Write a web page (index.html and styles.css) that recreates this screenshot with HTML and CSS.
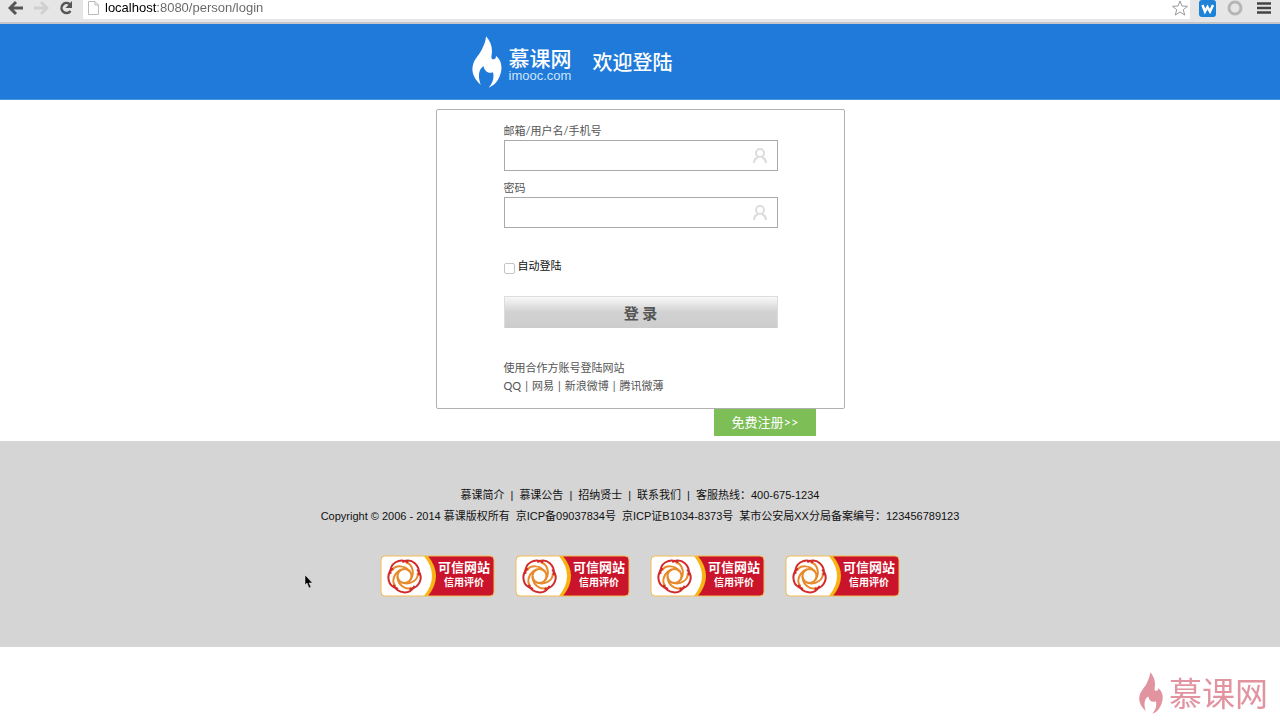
FILE: index.html
```
<!DOCTYPE html>
<html lang="zh-CN">
<head>
    <meta charset="UTF-8">
    <meta name="viewport" content="width=device-width, initial-scale=1.0">
    <title>欢迎登陆</title>
    <link rel="stylesheet" href="styles.css">
</head>
<body>
    <!-- Shared shapes -->
    <svg class="defs" width="0" height="0" aria-hidden="true">
        <defs>
            <symbol id="flame" viewBox="0 0 90 158">
                <path d="M42 1C56 16 63 36 59 58C57 67 60 72 65 71C71 70 73 65 72 60C88 72 92 92 87 112C81 134 70 150 50 157C62 144 68 128 63 110C50 116 37 108 35 92C22 98 15 120 26 148C6 130 -3 110 2 90C7 68 20 60 29 42C35 29 41 18 42 1Z"/>
            </symbol>
            <symbol id="person" viewBox="0 0 16 16">
                <circle cx="8" cy="5" r="4" fill="none" stroke="currentColor" stroke-width="2"/>
                <path d="M2 15C2 12 4 10 6 9M14 15C14 12 12 10 10 9" fill="none" stroke="currentColor" stroke-width="2"/>
            </symbol>
            <symbol id="badge" viewBox="0 0 115 42">
                <rect x="1" y="1" width="113" height="40" rx="4" fill="#c9142b"/>
                <path d="M5 1H48Q64 21 48 41H5Q1 41 1 37V5Q1 1 5 1Z" fill="#f8b414"/>
                <path d="M5 1H44Q60 21 44 41H5Q1 41 1 37V5Q1 1 5 1Z" fill="#fff"/>
                <rect x="1" y="1" width="113" height="40" rx="4" fill="none" stroke="#f3bd55" stroke-width="1"/>
                <g transform="translate(24.500 21)" fill="none" stroke-linecap="round">
                    <g stroke="#e8892b" stroke-width="2">
                        <path id="blade" d="M-12 -6C-9 -11 0 -11 5 -5"/>
                        <use href="#blade" transform="rotate(72)"/>
                        <use href="#blade" transform="rotate(144)"/>
                        <use href="#blade" transform="rotate(216)"/>
                        <use href="#blade" transform="rotate(288)"/>
                        <circle r="7"/>
                    </g>
                    <g stroke="#d22b2b" stroke-width="2">
                        <path id="petal" d="M-14 -3C-15 -13 -5 -18 3 -14"/>
                        <use href="#petal" transform="rotate(72)"/>
                        <use href="#petal" transform="rotate(144)"/>
                        <use href="#petal" transform="rotate(216)"/>
                        <use href="#petal" transform="rotate(288)"/>
                    </g>
                </g>
            </symbol>
        </defs>
    </svg>

    <!-- Browser Toolbar -->
    <div class="toolbar">
        <button class="tool" type="button" aria-label="Back">
            <svg width="16" height="16" viewBox="0 0 16 16"><path d="M15 8H3M8 2L2 8L8 14" fill="none" stroke="#555" stroke-width="3"/></svg>
        </button>
        <button class="tool" type="button" aria-label="Forward">
            <svg width="16" height="16" viewBox="0 0 16 16"><path d="M1 8H13M8 2L14 8L8 14" fill="none" stroke="#d0d0d0" stroke-width="3"/></svg>
        </button>
        <button class="tool" type="button" aria-label="Reload">
            <svg width="16" height="16" viewBox="0 0 16 16"><path d="M12.500 11A5 5 0 1 1 11.500 4" fill="none" stroke="#555" stroke-width="2.500"/><path d="M14 1V8H7.500Z" fill="#555"/></svg>
        </button>
        <div class="address">
            <svg width="11" height="14" viewBox="0 0 11 14"><path d="M.5 .5H7L10.500 4V13.500H.5ZM7 .5V4H10.500" fill="#fff" stroke="#bbb"/></svg>
            <input class="url" type="text" value="localhost:8080/person/login" aria-label="Address">
            <button class="tool" type="button" aria-label="Bookmark">
                <svg width="16" height="16" viewBox="0 0 16 16"><path d="M8 1L10 6L15.500 6.300L11.300 9.700L12.700 15L8 12L3.300 15L4.700 9.700L.5 6.300L6 6Z" fill="#fff" stroke="#999"/></svg>
            </button>
        </div>
        <button class="tool" type="button" aria-label="Extension">
            <svg width="17" height="17" viewBox="0 0 17 17"><rect width="17" height="17" rx="3" fill="#1c83d8"/><path d="M3.500 5L6 11.500L8.500 7L11 11.500L14 5" fill="none" stroke="#fff" stroke-width="2.500"/></svg>
        </button>
        <button class="tool" type="button" aria-label="Status">
            <svg width="16" height="16" viewBox="0 0 16 16"><circle cx="8" cy="8" r="6" fill="none" stroke="#b5b5b8" stroke-width="3"/></svg>
        </button>
        <button class="tool" type="button" aria-label="Menu">
            <svg width="14" height="12" viewBox="0 0 14 12"><path d="M0 1.500H14M0 6H14M0 10.500H14" stroke="#444" stroke-width="2.500"/></svg>
        </button>
    </div>

    <!-- Header -->
    <header class="header">
        <div class="header-inner">
            <svg class="logo-flame" width="30" height="52"><use href="#flame"/></svg>
            <div class="logo-text">
                <span class="logo-name">慕课网</span>
                <span class="logo-domain">imooc.com</span>
            </div>
            <h1>欢迎登陆</h1>
        </div>
    </header>

    <!-- Login Form -->
    <main class="main">
        <form class="login-box">
            <label for="username">邮箱/用户名/手机号</label>
            <div class="field">
                <input type="text" id="username">
                <svg width="16" height="16"><use href="#person"/></svg>
            </div>
            <label for="password">密码</label>
            <div class="field">
                <input type="password" id="password">
                <svg width="16" height="16"><use href="#person"/></svg>
            </div>
            <div class="auto-login">
                <input type="checkbox" id="auto">
                <label for="auto">自动登陆</label>
            </div>
            <button class="login-btn" type="button">登 录</button>
            <div class="partners">
                <p>使用合作方账号登陆网站</p>
                <p><a href="#">QQ</a><span>|</span><a href="#">网易</a><span>|</span><a href="#">新浪微博</a><span>|</span><a href="#">腾讯微薄</a></p>
            </div>
        </form>
        <a class="register" href="#">免费注册&gt;&gt;</a>
    </main>

    <!-- Footer -->
    <footer class="footer">
        <p class="footer-links">
            <a href="#">慕课简介</a><span>|</span><a href="#">慕课公告</a><span>|</span><a href="#">招纳贤士</a><span>|</span><a href="#">联系我们</a><span>|</span>客服热线：400-675-1234
        </p>
        <p class="copyright">
            <span>Copyright © 2006 - 2014 慕课版权所有</span>
            <span>京ICP备09037834号</span>
            <span>京ICP证B1034-8373号</span>
            <span>某市公安局XX分局备案编号：123456789123</span>
        </p>
        <div class="badges">
            <a class="badge" href="#"><svg width="115" height="42"><use href="#badge"/></svg><span class="badge-text"><strong>可信网站</strong><b>信用评价</b></span></a>
            <a class="badge" href="#"><svg width="115" height="42"><use href="#badge"/></svg><span class="badge-text"><strong>可信网站</strong><b>信用评价</b></span></a>
            <a class="badge" href="#"><svg width="115" height="42"><use href="#badge"/></svg><span class="badge-text"><strong>可信网站</strong><b>信用评价</b></span></a>
            <a class="badge" href="#"><svg width="115" height="42"><use href="#badge"/></svg><span class="badge-text"><strong>可信网站</strong><b>信用评价</b></span></a>
        </div>
    </footer>

    <!-- Overlays -->
    <div class="watermark">
        <svg width="24" height="42"><use href="#flame"/></svg>
        <span>慕课网</span>
    </div>
    <svg class="pointer" width="10" height="15" viewBox="0 0 10 15"><path d="M1 1V11L3 9L5 14L7 13L5 9H8.500Z" fill="#000" stroke="#eee" stroke-width=".5"/></svg>
</body>
</html>
```
FILE: styles.css
```
* {
    box-sizing: border-box;
}

body {
    margin: 0;
    font-family: Lato, "Noto Sans CJK SC", sans-serif;
    font-size: 11px;
    color: #111;
    background: #fff;
}

p,
h1 {
    margin: 0;
}

a {
    color: inherit;
    text-decoration: none;
}

.defs {
    position: absolute;
}

.toolbar {
    display: flex;
    align-items: center;
    gap: 9px;
    height: 24px;
    padding: 0 8px 6px;
    background: #e6e6e6;
    border-bottom: 2px solid #c4c6ca;
}

.tool {
    display: flex;
    flex-shrink: 0;
    align-items: center;
    justify-content: center;
    min-width: 16px;
    padding: 0;
    border: none;
    background: none;
}

.toolbar > .tool:last-child {
    margin-left: 4px;
}

.toolbar > .tool:nth-last-child(2) {
    margin-left: 2px;
}

.address {
    display: flex;
    flex: 1;
    align-items: center;
    gap: 6px;
    height: 22px;
    padding: 0 2px 0 5px;
    background: #fff;
}

/* host part of the url is darker than the path */
.url {
    flex: 1;
    padding: 0;
    border: none;
    outline: none;
    font-family: "Liberation Sans", Arial, sans-serif;
    font-size: 13px;
    line-height: 16px;
    color: #555;
    background: linear-gradient(to right, #000 52px, #666 52px);
    -webkit-background-clip: text;
    background-clip: text;
    -webkit-text-fill-color: transparent;
}

.header {
    background: #1f7ad9;
    border-bottom: 1px solid #4c94de;
}

.header-inner {
    display: flex;
    align-items: center;
    max-width: 409px;
    height: 75px;
    margin: 0 auto;
    padding-left: 36px;
    color: #fff;
}

.logo-flame {
    fill: #fff;
}

.logo-text {
    display: flex;
    flex-direction: column;
    margin: 4px 21px 0 7px;
}

.logo-name {
    font-family: "Noto Sans CJK SC", sans-serif;
    font-size: 21px;
    font-weight: 500;
    line-height: 24px;
}

.logo-domain {
    font-family: "Liberation Sans", Arial, sans-serif;
    font-size: 13px;
    line-height: 14px;
    color: #cfe4fb;
}

.header h1 {
    font-size: 20px;
    font-weight: 500;
    line-height: 24px;
}

.main {
    display: flex;
    flex-direction: column;
    max-width: 409px;
    margin: 9px auto 5px;
}

.login-box {
    padding: 12px 66px 13px 67px;
    border: 1px solid #b0b0b0;
    border-radius: 2px;
    color: #555;
    line-height: 18px;
}

.login-box > label {
    display: block;
}

.field {
    display: flex;
    align-items: center;
    height: 31px;
    margin-bottom: 8px;
    padding-right: 9px;
    border: 1px solid #aaa;
    color: #ddd;
}

.field input {
    flex: 1;
    min-width: 0;
    height: 100%;
    padding: 0 8px;
    border: none;
    outline: none;
    background: none;
}

.auto-login {
    display: flex;
    align-items: center;
    gap: 3px;
    margin: 29px 0 21px;
    color: #111;
}

.auto-login input {
    appearance: none;
    width: 11px;
    height: 11px;
    margin: 4px 0 0;
    border: 1px solid #c4c4c4;
    border-radius: 2px;
    background: #fff;
}

.auto-login input:checked {
    background: #1f7ad9;
}

.login-btn {
    display: block;
    width: 100%;
    height: 32px;
    padding: 0;
    border: 1px solid #ddd;
    border-bottom-color: #ccc;
    background: linear-gradient(#f8f8f8, #d2d2d2 50%, #cdcdcd);
    font-family: inherit;
    font-size: 15px;
    font-weight: bold;
    color: #555;
}

.partners {
    margin-top: 31px;
}

.partners span {
    margin: 0 4px;
}

.register {
    align-self: flex-end;
    margin-right: 29px;
    padding: 0 17px;
    background: #7dbe57;
    font-size: 13px;
    line-height: 27px;
    color: #fff;
}

.footer {
    padding: 44px 0 50px;
    background: #d5d5d5;
    font-family: "Liberation Sans", "Noto Sans CJK SC", sans-serif;
    line-height: 21px;
    text-align: center;
}

.footer-links span {
    margin: 0 6px;
}

.copyright {
    display: flex;
    flex-wrap: wrap;
    justify-content: center;
    column-gap: 6px;
}

.badges {
    display: flex;
    justify-content: center;
    gap: 20px;
    margin-top: 28px;
}

.badge {
    position: relative;
    display: flex;
}

.badge-text {
    position: absolute;
    top: 5px;
    right: 5px;
    display: flex;
    flex-direction: column;
    align-items: center;
    color: #fff;
}

.badge-text strong {
    font-size: 13px;
    line-height: 16px;
}

.badge-text b {
    font-size: 10px;
    line-height: 14px;
}

.watermark {
    position: fixed;
    right: 12px;
    bottom: 6px;
    display: flex;
    align-items: center;
    gap: 6px;
    color: #e293a0;
    fill: #e293a0;
    font-size: 33px;
    line-height: 42px;
}

.pointer {
    position: absolute;
    left: 304px;
    top: 574px;
}
```
